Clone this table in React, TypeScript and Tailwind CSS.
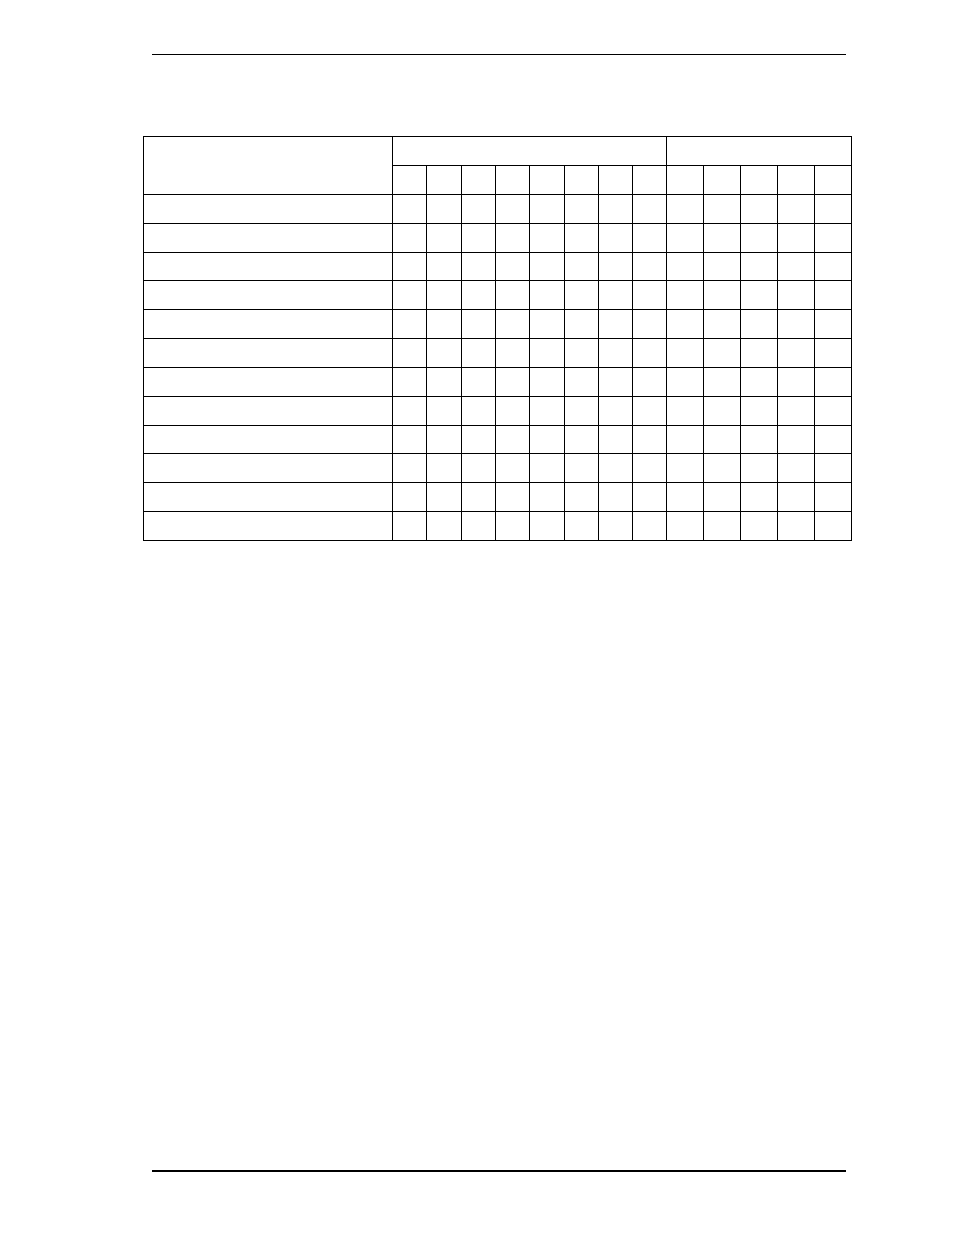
const colWidths = "grid-cols-[249px_34px_35px_34px_34px_35px_34px_34px_34px_37px_37px_37px_37px_37px]";
const rowHeights = "grid-rows-[29px_29px_29px_29px_28px_29px_29px_29px_29px_29px_28px_29px_29px_29px]";

const cell = "border-r border-b border-black";

export default function App() {
  const bodyRows = Array.from({ length: 12 });
  const cols = Array.from({ length: 14 });
  const subCols = Array.from({ length: 13 });

  return (
    <div className="w-[954px] h-[1235px] bg-white overflow-hidden" style={{ fontFamily: '"Liberation Sans", Arial, sans-serif' }}>
      <div className="pt-[54px]">
        <div className="ml-[152px] w-[694px] h-px bg-black" />
      </div>

      <div className={`mt-[81px] ml-[143px] w-[709px] grid ${colWidths} ${rowHeights} border-l border-t border-black`}>
        <div className={`${cell} row-span-2`} />
        <div className={`${cell} col-span-8`} />
        <div className={`${cell} col-span-5`} />
        {subCols.map((_, i) => (
          <div key={`h${i}`} className={cell} />
        ))}
        {bodyRows.map((_, r) =>
          cols.map((_, c) => <div key={`${r}-${c}`} className={cell} />)
        )}
      </div>

      <div className="mt-[629px] ml-[152px] w-[694px] h-[2px] bg-black" />
    </div>
  );
}
